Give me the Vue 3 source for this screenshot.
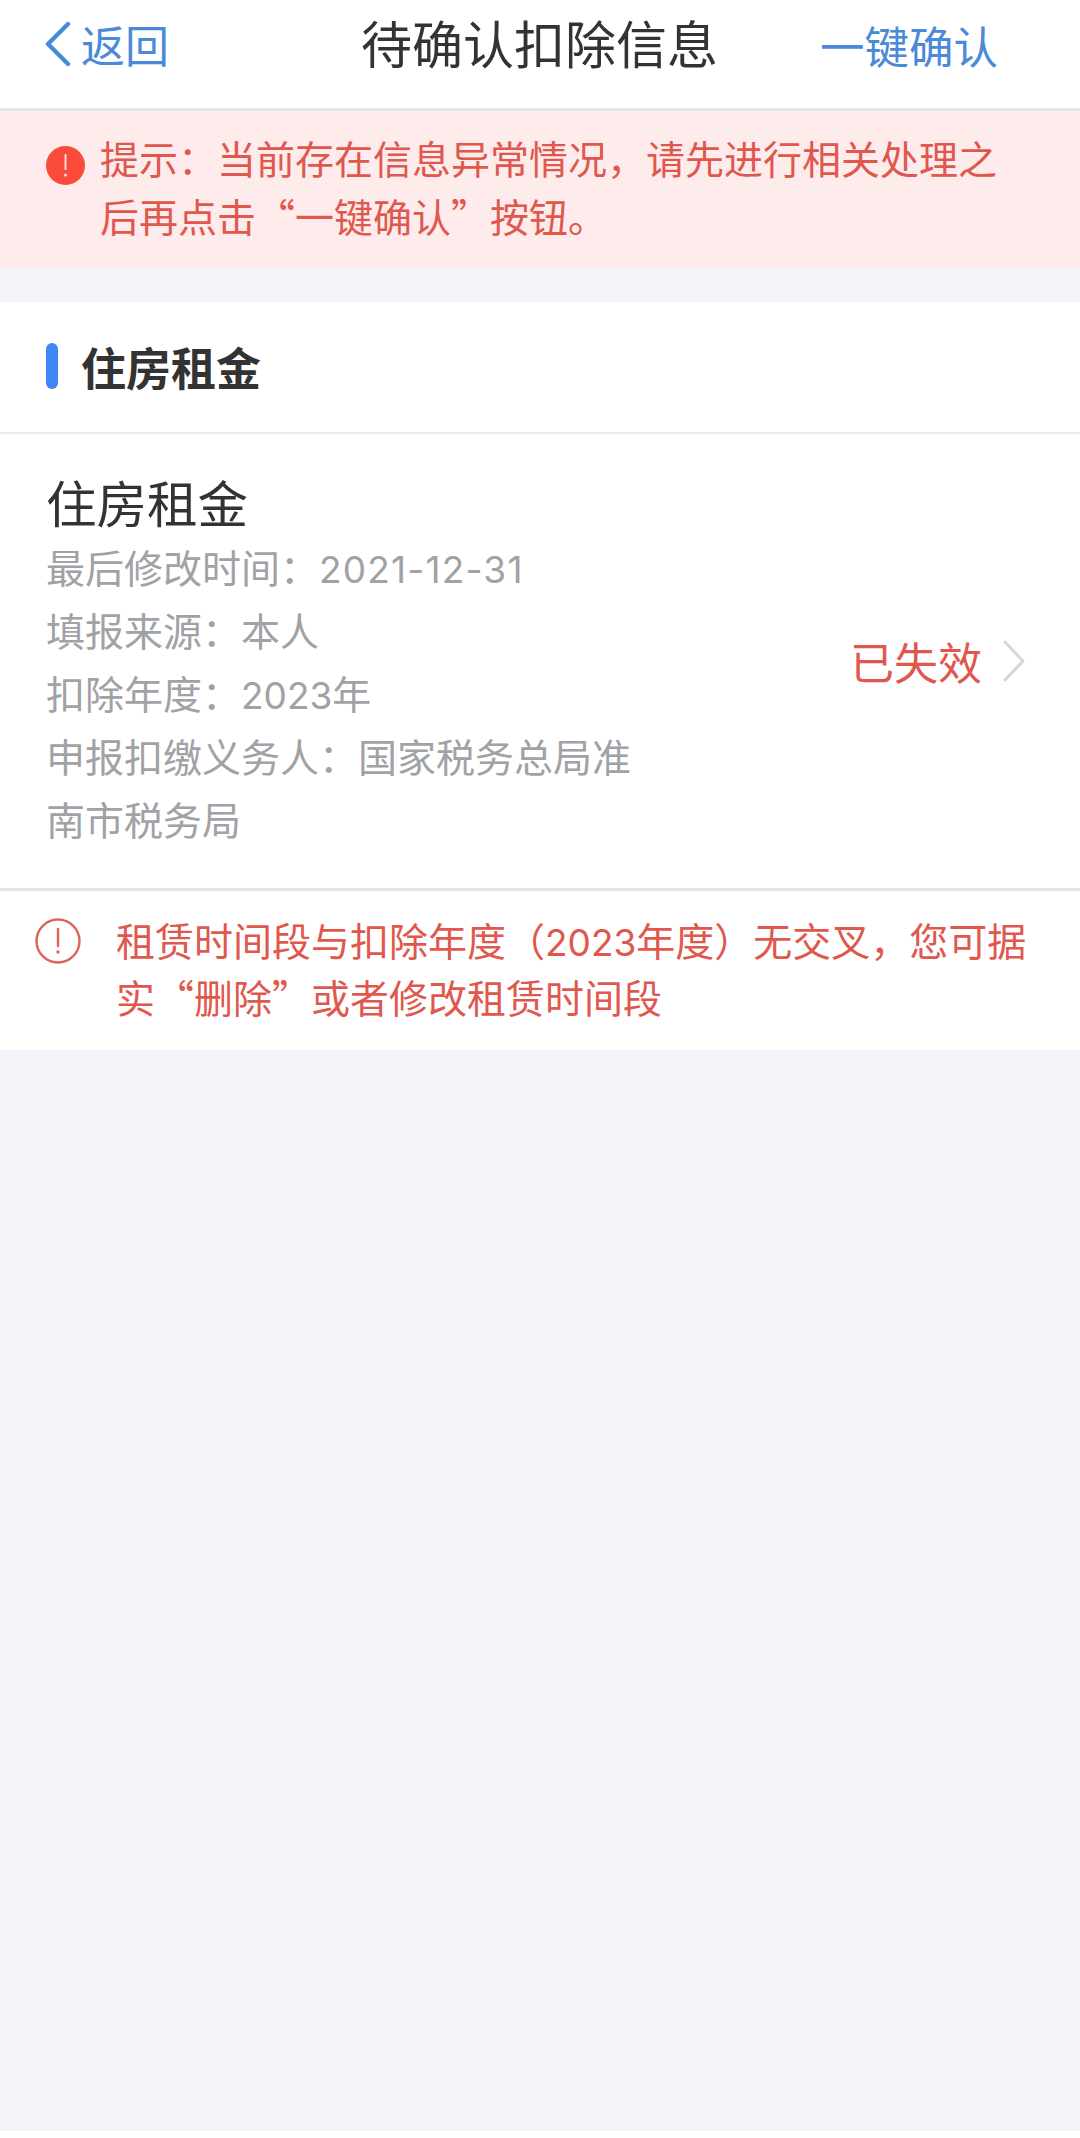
<script setup>
const details = [
  { label: "最后修改时间：", num: "2021-12-31", date: true },
  { label: "填报来源：本人" },
  { label: "扣除年度：", num: "2023", unit: "年" },
  { label: "申报扣缴义务人：国家税务总局准南市税务局" },
];
</script>

<template>
  <div class="page">
    <header class="nav">
      <div class="back">
        <svg class="back-icon" width="27" height="46" viewBox="0 0 27 46">
          <path d="M24 3 L4 23 L24 43" fill="none" stroke="#4a8ad8" stroke-width="4.4" stroke-linecap="round" stroke-linejoin="round" />
        </svg>
        <span>返回</span>
      </div>
      <h1 class="nav-title">待确认扣除信息</h1>
      <div class="nav-action">一键确认</div>
    </header>

    <div class="notice">
      <svg class="notice-icon" width="39" height="39" viewBox="0 0 39 39">
        <circle cx="19.5" cy="19.5" r="19.5" fill="#fb4b3a" />
        <path d="M19.5 9 V23" stroke="#ffd9d4" stroke-width="2" stroke-linecap="round" />
        <circle cx="19.5" cy="29" r="1.6" fill="#ffd9d4" />
      </svg>
      <p class="notice-text">提示：当前存在信息异常情况，请先进行相关处理之后再点击“一键确认”按钮。</p>
    </div>

    <section class="card">
      <div class="section-head">
        <span class="section-bar"></span>
        <h2 class="section-title">住房租金</h2>
      </div>

      <div class="item">
        <div class="item-info">
          <div class="item-title">住房租金</div>
          <div v-for="line in details" :key="line.label" class="item-line">
            {{ line.label }}<span v-if="line.num" class="num" :class="{ 'num-date': line.date }">{{ line.num }}</span>{{ line.unit }}
          </div>
        </div>
        <div class="item-status">
          <span>已失效</span>
          <svg width="24" height="42" viewBox="0 0 24 42">
            <path d="M3 2 L21 21 L3 40" fill="none" stroke="#d6d6d9" stroke-width="3" stroke-linecap="round" stroke-linejoin="round" />
          </svg>
        </div>
      </div>

      <div class="warning">
        <svg class="warning-icon" width="46" height="46" viewBox="0 0 46 46">
          <circle cx="23" cy="23" r="21.5" fill="none" stroke="#dd6459" stroke-width="2.4" />
          <path d="M23 11 V28" stroke="#dd6459" stroke-width="2.4" stroke-linecap="round" />
          <circle cx="23" cy="34" r="1.7" fill="#dd6459" />
        </svg>
        <p class="warning-text">租赁时间段与扣除年度（<span class="num">2023</span>年度）无交叉，您可据实“删除”或者修改租赁时间段</p>
      </div>
    </section>

    <div class="fill"></div>
    <div class="home-strip"></div>
  </div>
</template>

<style scoped>
.page {
  width: 1080px;
  height: 2138px;
  display: flex;
  flex-direction: column;
  overflow: hidden;
  background: #f4f5fa;
  font-family: "Noto Sans CJK SC", "Noto Sans", sans-serif;
  color: #333;
}

.num {
  font-family: Inter, "Noto Sans CJK SC", sans-serif;
  font-size: 37px;
  line-height: 1;
}

.num-date {
  letter-spacing: 1.2px;
}

.nav {
  height: 108px;
  flex: none;
  box-sizing: content-box;
  display: grid;
  grid-template-columns: 1fr auto 1fr;
  align-items: start;
  padding: 0 45px 0 44px;
  background: #fff;
  border-bottom: 3px solid #e8e6e8;
}

.back {
  display: flex;
  align-items: center;
  gap: 10px;
  height: 88px;
  color: #4a8ad8;
  font-size: 44px;
}

.nav-title {
  margin: 0;
  height: 84px;
  line-height: 84px;
  font-size: 51px;
  font-weight: 400;
  color: #333;
}

.nav-action {
  justify-self: end;
  margin-right: 37px;
  height: 90px;
  line-height: 90px;
  font-size: 44.5px;
  color: #4a8ad8;
}

.notice {
  flex: none;
  height: 157px;
  box-sizing: border-box;
  display: flex;
  align-items: flex-start;
  gap: 15px;
  padding: 17px 60px 0 46px;
  background: #fdeceb;
}

.notice-icon {
  flex: none;
  margin-top: 18px;
}

.notice-text {
  margin: 0;
  font-size: 39px;
  line-height: 58px;
  color: #e0584d;
}

.card {
  flex: none;
  margin-top: 34px;
  background: #fff;
}

.section-head {
  height: 132px;
  box-sizing: border-box;
  display: flex;
  align-items: center;
  padding: 0 0 2px 46px;
  border-bottom: 2px solid #ececec;
}

.section-bar {
  width: 12px;
  height: 46px;
  border-radius: 6px;
  background: #3f86f7;
}

.section-title {
  margin: 0 0 0 23px;
  font-size: 45px;
  font-weight: 700;
  color: #333;
}

.item {
  height: 454px;
  box-sizing: border-box;
  display: flex;
  align-items: center;
  justify-content: space-between;
  padding: 0 54px 0 46px;
}

.item-info {
  width: 590px;
  padding-bottom: 5px;
}

.item-title {
  font-size: 50.5px;
  line-height: 66px;
  margin-bottom: 1px;
  color: #333;
}

.item-line {
  font-size: 39px;
  line-height: 63px;
  color: #a0a2a6;
}

.item-status {
  display: flex;
  align-items: center;
  gap: 20px;
  font-size: 44px;
  color: #e0584d;
}

.warning {
  display: flex;
  align-items: flex-start;
  gap: 35px;
  height: 162px;
  box-sizing: border-box;
  padding: 20px 35px 0 35px;
  border-top: 3px solid #e4e4e4;
}

.warning-icon {
  flex: none;
  margin-top: 7px;
}

.warning-text {
  margin: 0;
  font-size: 39px;
  line-height: 57px;
  color: #e0584d;
}

.fill {
  flex: 1;
}

.home-strip {
  flex: none;
  height: 7px;
  background: #fff;
}
</style>
